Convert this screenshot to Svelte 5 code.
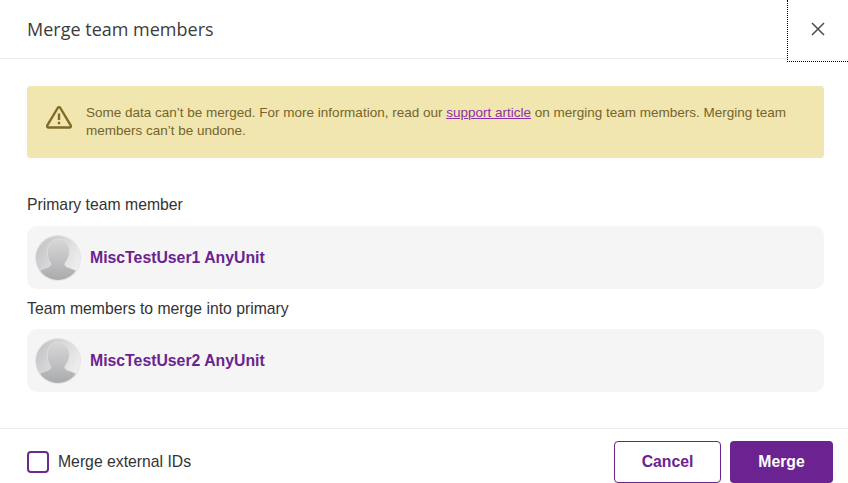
<script>
  const sections = [
    { label: "Primary team member", name: "MiscTestUser1 AnyUnit" },
    { label: "Team members to merge into primary", name: "MiscTestUser2 AnyUnit" }
  ];
</script>

<div class="dialog">
  <header>
    <h1>Merge team members</h1>
    <button class="close" aria-label="Close">
      <svg width="14" height="14" viewBox="0 0 14 14">
        <path d="M1 1l12 12M13 1L1 13" stroke="#4a4a4a" stroke-width="1.5" fill="none" />
      </svg>
    </button>
  </header>

  <main>
    <div class="notice">
      <svg class="warn" width="28" height="24" viewBox="0 0 28 24">
        <path d="M12.700 3L2.300 20.300c-.6 1 .1 2.200 1.300 2.200h20.800c1.200 0 1.900-1.200 1.300-2.200L15.300 3c-.6-1-2-1-2.600 0z" fill="none" stroke="#7f6b26" stroke-width="2.400" stroke-linejoin="round" />
        <path d="M14 8.500v6.500M14 16.800v2.400" stroke="#7f6b26" stroke-width="2.400" fill="none" />
      </svg>
      <p>Some data can’t be merged. For more information, read our <a href="#top">support article</a> on merging team members. Merging team members can’t be undone.</p>
    </div>

    {#each sections as s, i}
      <div class="label" class:first={i === 0}>{s.label}</div>
      <div class="member">
        <svg class="avatar" width="46" height="46" viewBox="0 0 46 46">
          <defs>
            <linearGradient id="bg{i}" x1="0" y1="0" x2="1" y2="0.6">
              <stop offset="0" stop-color="#bfc0c2" />
              <stop offset="1" stop-color="#eeeeef" />
            </linearGradient>
            <linearGradient id="fg{i}" x1="0" y1="0" x2="0" y2="1">
              <stop offset="0" stop-color="#d8d8d9" />
              <stop offset="1" stop-color="#a9aaac" />
            </linearGradient>
            <clipPath id="clip{i}"><circle cx="23" cy="23" r="22" /></clipPath>
          </defs>
          <circle cx="23" cy="23" r="23" fill="#e4e4e6" />
          <circle cx="23" cy="23" r="22" fill="url(#bg{i})" />
          <path clip-path="url(#clip{i})" d="M23.500 4c6.500 0 11 5 11 12 0 5-2 9-4.500 12-.8 2 .2 3.500 3 4.500 5 1.500 9 3 11.500 7l1 6H0l1-6c2.500-4 6.500-5.500 11.500-7 2.800-1 3.800-2.500 3-4.500-2.500-3-3-7-3-12 0-7 4.500-12 11-12z" fill="url(#fg{i})" stroke="#e6e6e7" stroke-width="0.6" />
        </svg>
        <span class="name">{s.name}</span>
      </div>
    {/each}
  </main>

  <footer>
    <label class="check">
      <span class="box"></span>
      <span>Merge external IDs</span>
    </label>
    <div class="actions">
      <button class="btn outline">Cancel</button>
      <button class="btn solid">Merge</button>
    </div>
  </footer>
</div>

<style>
  :global(body) {
    background: #fff;
  }
  .dialog {
    width: 848px;
    height: 483px;
    display: flex;
    flex-direction: column;
    font-family: "Liberation Sans", Arial, sans-serif;
    color: #333;
    overflow: hidden;
  }
  header {
    height: 59px;
    box-sizing: border-box;
    display: flex;
    justify-content: space-between;
    border-bottom: 1px solid #ebebeb;
    padding-left: 27px;
  }
  h1 {
    margin: 0;
    align-self: center;
    font-family: "Open Sans", sans-serif;
    font-size: 18px;
    font-weight: 400;
    color: #3c3c3c;
  }
  .close {
    all: unset;
    box-sizing: border-box;
    width: 61px;
    height: 62px;
    flex: none;
    display: flex;
    align-items: center;
    justify-content: center;
    padding: 0 0 4px 0;
    border-left: 1px dotted #000;
    border-bottom: 1px dotted #000;
    background: #fff;
    position: relative;
  }
  main {
    flex: 1;
    padding: 27px 24px 0 27px;
  }
  .notice {
    height: 72px;
    box-sizing: border-box;
    display: flex;
    align-items: center;
    gap: 13px;
    padding: 0 18px;
    background: #f1e6b0;
    border-radius: 4px;
  }
  .warn {
    flex: none;
    margin-bottom: 10px;
  }
  .notice p {
    margin: 0;
    font-size: 13.500px;
    line-height: 18px;
    color: #75642a;
  }
  .notice a {
    color: #8e2fa8;
  }
  .label {
    font-size: 15.750px;
    line-height: 20px;
    color: #333;
    margin: 10px 0 10px;
  }
  .label.first {
    margin-top: 37px;
    margin-bottom: 11px;
  }
  .member {
    height: 63px;
    box-sizing: border-box;
    display: flex;
    align-items: center;
    gap: 9px;
    padding-left: 8px;
    background: #f5f5f5;
    border-radius: 10px;
  }
  .avatar {
    flex: none;
  }
  .name {
    font-size: 15.800px;
    font-weight: 700;
    color: #6b2391;
  }
  footer {
    height: 55px;
    box-sizing: border-box;
    display: flex;
    align-items: flex-start;
    justify-content: space-between;
    border-top: 1px solid #ebebeb;
    padding: 12px 15px 0 27px;
  }
  .check {
    display: flex;
    align-items: center;
    gap: 9px;
    height: 42px;
    font-size: 15.750px;
    color: #333;
  }
  .box {
    width: 22px;
    height: 22px;
    box-sizing: border-box;
    border: 2px solid #6b2a8c;
    border-radius: 4px;
  }
  .actions {
    display: flex;
    gap: 9px;
  }
  .btn {
    all: unset;
    box-sizing: border-box;
    height: 42px;
    text-align: center;
    font-size: 15.750px;
    font-weight: 700;
    border-radius: 4px;
  }
  .outline {
    width: 107px;
    border: 1px solid #6b2391;
    color: #6b2391;
    background: #fff;
  }
  .solid {
    width: 103px;
    background: #6b2391;
    color: #fff;
  }
</style>
